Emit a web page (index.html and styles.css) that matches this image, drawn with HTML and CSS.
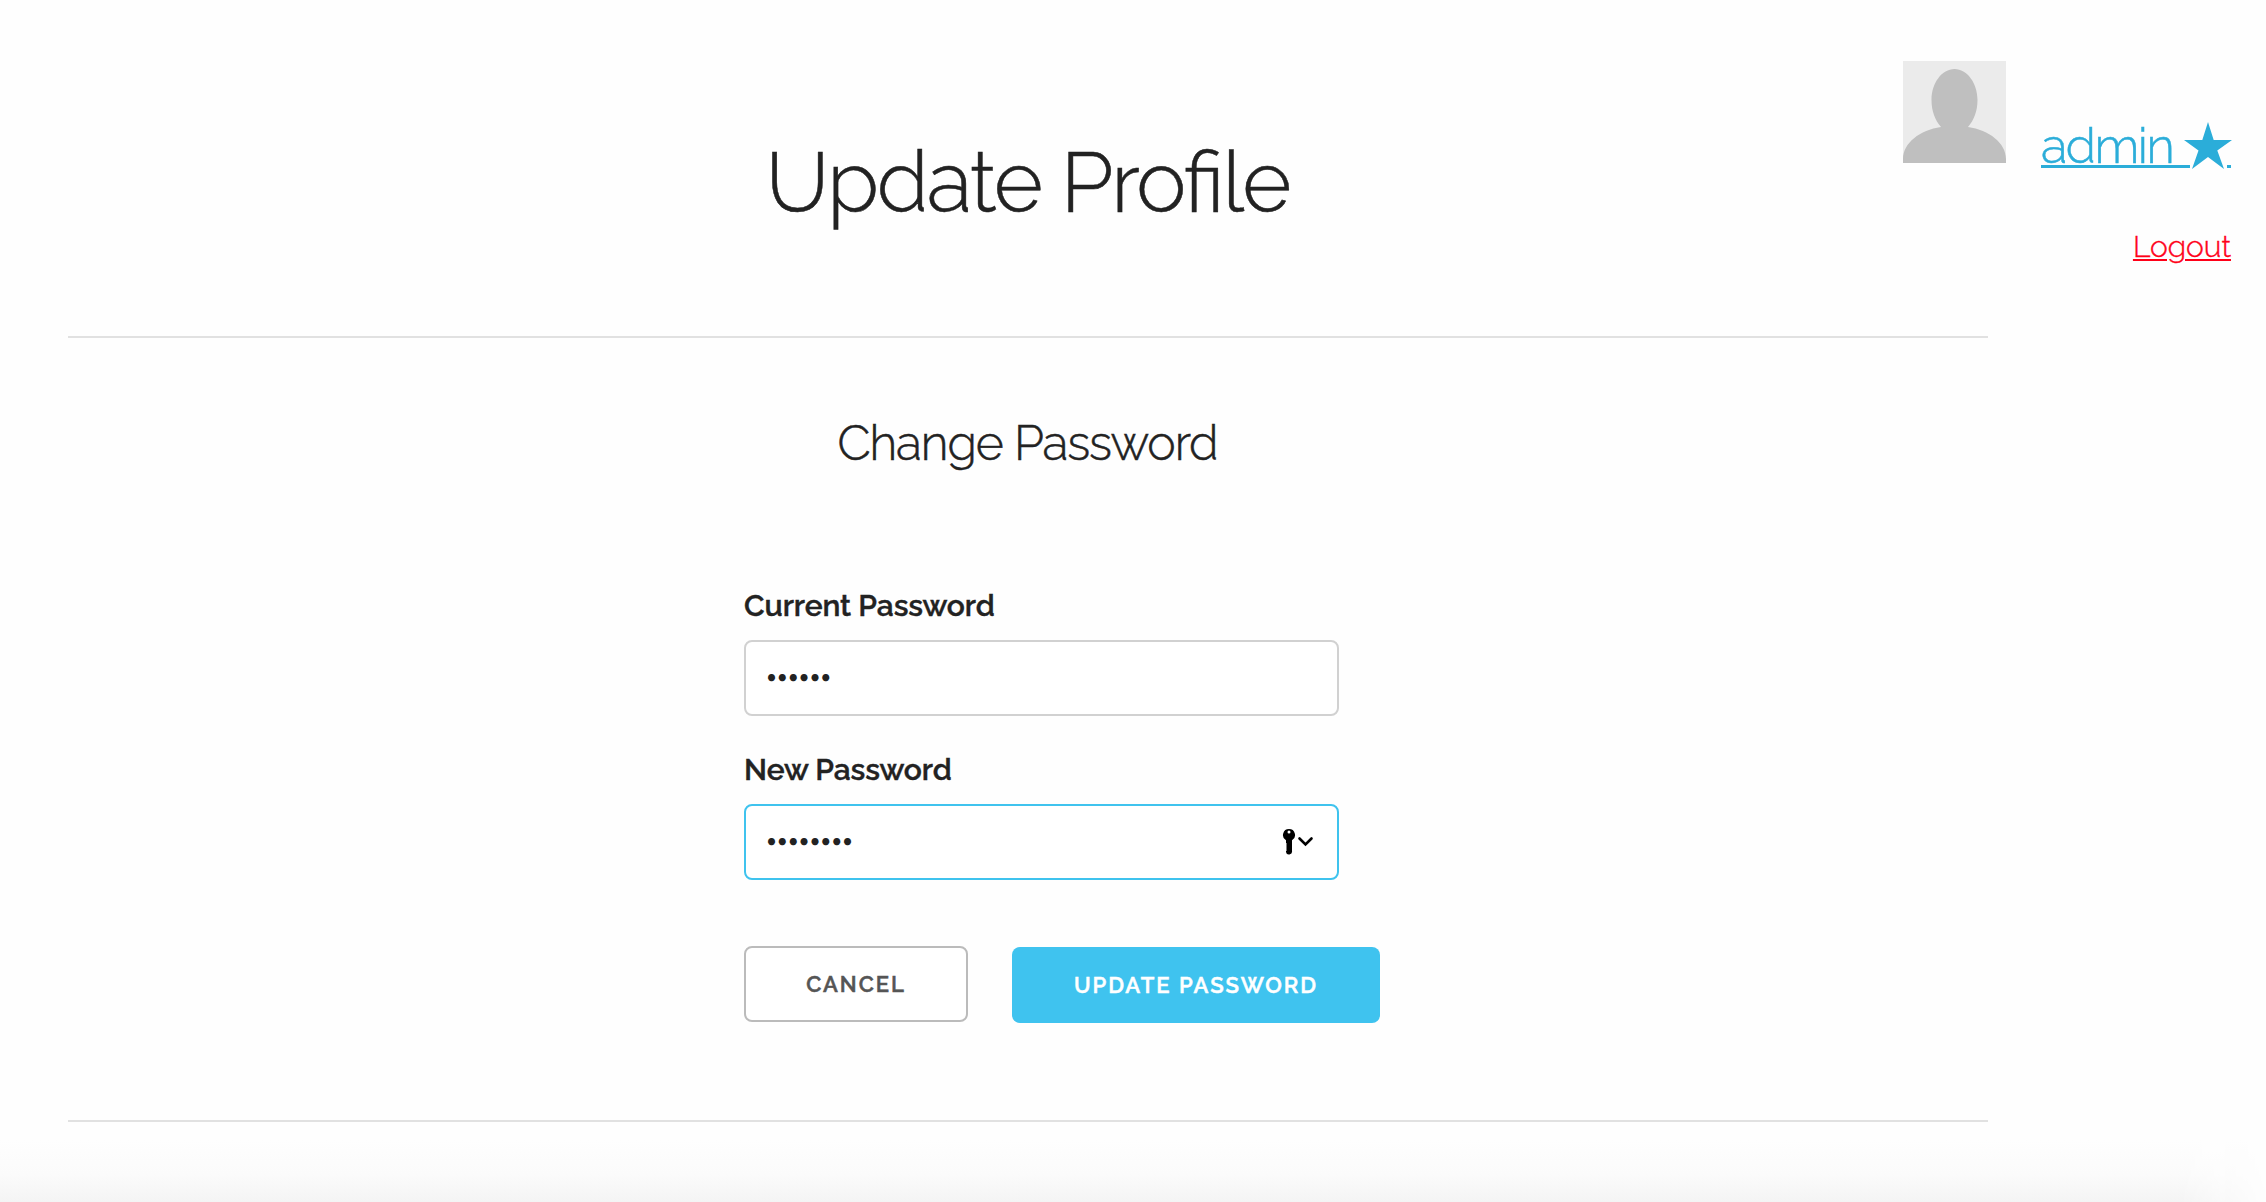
FILE: index.html
```html
<!DOCTYPE html>
<html lang="en">
<head>
<meta charset="utf-8">
<title>Update Profile</title>
<link rel="stylesheet" href="styles.css">
</head>
<body>
<div class="page">
  <main class="content">
    <header class="page-header"><h1>Update Profile</h1></header>
    <section class="panel">
      <h2>Change Password</h2>
      <form class="form">
        <label for="current">Current Password</label>
        <div class="field"><input id="current" type="password" value="secret"></div>
        <label for="new">New Password</label>
        <div class="field field-active">
          <input id="new" type="password" value="password">
          <svg class="key" width="32" height="26" viewBox="0 0 32 26">
            <path fill-rule="evenodd" d="M7 0a6 6 0 0 1 3 11.200V22a3 3 0 0 1-6 1v-1l1-1-1-1 1-1-1-1 1-1-1-1 1-1-1-1V11.200A6 6 0 0 1 7 0zM7 1.500a1.500 1.500 0 1 0 0 3a1.500 1.500 0 0 0 0-3z"/>
            <path d="M17.500 9.500l6 6 6-6" fill="none" stroke="#000" stroke-width="2.600" stroke-linecap="round"/>
          </svg>
        </div>
        <div class="actions">
          <button class="cancel" type="button">CANCEL</button>
          <button class="update" type="button">UPDATE PASSWORD</button>
        </div>
      </form>
    </section>
  </main>
  <aside class="account">
    <svg class="avatar" width="103" height="102" viewBox="0 0 103 102">
      <path fill="#ebebeb" d="M0 0h103v102H0z"/>
      <path fill="#bfbfbf" d="M51.500 8C64 8 74.500 22 74.500 39c0 11-3.500 20-9.500 27 21 3 38 16 38 32v4H0v-4c0-16 17-29 38-32-6-7-9.500-16-9.500-27C28.500 22 39 8 51.500 8z"/>
    </svg>
    <div class="links">
      <a class="user" href="#"><span class="name">admin</span><svg class="star" width="48" height="47" viewBox="0 0 48 47"><path d="M24 0l5.700 18H48L33.300 28.600 40 47 24 35 8 47l6.500-18.400L0 18h18.300z"/></svg></a>
      <a class="logout" href="#">Logout</a>
    </div>
  </aside>
</div>
<div class="footer-shade"></div>
</body>
</html>
```
FILE: styles.css
```css
* { box-sizing: border-box; }
body { margin: 0; height: 1202px; overflow: hidden; background: #fefefe; color: #222; font-family: Raleway, Lato, sans-serif; display: flex; flex-direction: column; }
.page { display: flex; height: 1140px; padding-left: 68px; }
.content { width: 1920px; flex: none; }
.page-header { height: 338px; border-bottom: 2px solid #e1e1e1; padding-top: 132px; }
h1, h2 { margin: 0; text-align: center; font-weight: 300; white-space: nowrap; -webkit-text-stroke: 0.5px currentColor; }
h1 { font-size: 84.5px; line-height: 101px; letter-spacing: -2.05px; padding-right: 1px; font-feature-settings: "liga" 1; }
h2 { font-size: 48px; line-height: 60px; letter-spacing: -1.05px; padding-right: 1px; }
.panel { height: 784px; border-bottom: 2px solid #e1e1e1; padding-top: 75px; }
.form { margin: 0 0 0 676px; width: 636px; padding-top: 115px; }
label { display: block; font-size: 30px; font-weight: 600; line-height: 36px; height: 52px; letter-spacing: -0.08px; -webkit-text-stroke: 0.4px currentColor; }
.field { width: 595px; height: 76px; border: 2px solid #d1d1d1; border-radius: 8px; background: #fff; display: flex; align-items: center; padding: 0 23px 0 20px; margin-bottom: 36px; }
.field-active { border-color: #3fc3ee; margin-bottom: 33px; }
.field input { flex: 1; min-width: 0; border: 0; padding: 0 0 4px; outline: 0; background: none; font: 400 19px Lato, sans-serif; letter-spacing: -0.15px; color: #222; }
.actions { display: flex; align-items: flex-start; gap: 44px; padding-top: 33px; }
button { height: 76px; border-radius: 8px; padding: 0; font: 600 22px Raleway, Lato, sans-serif; letter-spacing: 2px; white-space: nowrap; -webkit-text-stroke: 0.5px currentColor; }
.cancel { width: 224px; border: 2px solid #bbb; background: #fff; color: #555; }
.update { width: 368px; margin-top: 1px; border: 0; background: #3fc3ef; color: #fff; }
.account { flex: 1; display: flex; }
.avatar { flex: none; margin: 61px 0 0 -85px; }
.links { width: 190px; margin-left: 35px; flex: none; display: flex; flex-direction: column; padding-top: 122px; }
.user { height: 47px; display: flex; justify-content: space-between; color: #2badd9; text-decoration: none; background: linear-gradient(currentColor, currentColor) 0 43px / 149px 3px no-repeat, linear-gradient(currentColor, currentColor) 186px 43px / 4px 3px no-repeat; }
.name { font-size: 49px; font-weight: 300; line-height: 48px; letter-spacing: -1.5px; -webkit-text-stroke: 0.5px currentColor; }
.star { flex: none; margin-right: -1px; fill: currentColor; }
.logout { align-self: flex-end; margin-top: 60px; font-size: 30px; line-height: 36px; font-weight: 300; color: #ff0018; text-decoration-thickness: 2px; text-underline-offset: 2px; -webkit-text-stroke: 0.4px currentColor; }
.footer-shade { height: 62px; background: linear-gradient(#fefefe, #fbfbfb 55%, #f4f4f4); -webkit-mask-image: linear-gradient(to right, #000 2180px, transparent 2270px); mask-image: linear-gradient(to right, #000 2180px, transparent 2270px); }
```
